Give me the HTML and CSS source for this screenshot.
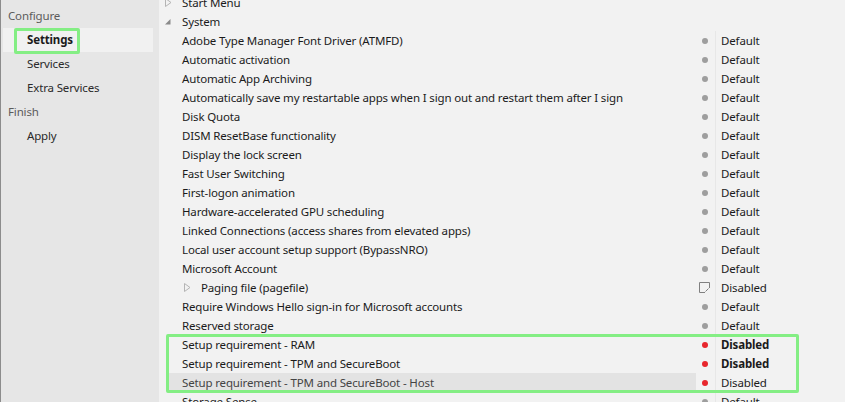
FILE: index.html
```html
<!DOCTYPE html>
<html>
<head>
<meta charset="utf-8">
<link rel="stylesheet" href="styles.css">
</head>
<body>
<div class="app">
  <nav class="sidebar">
    <div class="nav-heading">Configure</div>
    <div class="nav-item active"><span>Settings</span><div class="mark mark-nav"></div></div>
    <div class="nav-item">Services</div>
    <div class="nav-item">Extra Services</div>
    <div class="nav-heading">Finish</div>
    <div class="nav-item">Apply</div>
  </nav>
  <main class="main">
    <div class="tree">
      <div class="row"><div class="name top"><span class="exp"><svg width="8" height="9" viewBox="0 0 8 9"><path d="M1.5 0.5 L7 4.5 L1.5 8.5 Z" fill="none" stroke="#b4b4b4"/></svg></span><span class="label">Start Menu</span></div><div class="val"></div></div>
      <div class="row"><div class="name top"><span class="exp"><svg width="8" height="9" viewBox="0 0 8 9"><path d="M6.5 2 L6.5 7.5 L1 7.5 Z" fill="#8a8a8a"/></svg></span><span class="label">System</span></div><div class="val"></div></div>
      <div class="row"><div class="name leaf"><span class="label">Adobe Type Manager Font Driver (ATMFD)</span></div><div class="val"><span class="dot"></span><span class="vtext">Default</span></div></div>
      <div class="row"><div class="name leaf"><span class="label">Automatic activation</span></div><div class="val"><span class="dot"></span><span class="vtext">Default</span></div></div>
      <div class="row"><div class="name leaf"><span class="label">Automatic App Archiving</span></div><div class="val"><span class="dot"></span><span class="vtext">Default</span></div></div>
      <div class="row"><div class="name leaf"><span class="label">Automatically save my restartable apps when I sign out and restart them after I sign</span></div><div class="val"><span class="dot"></span><span class="vtext">Default</span></div></div>
      <div class="row"><div class="name leaf"><span class="label">Disk Quota</span></div><div class="val"><span class="dot"></span><span class="vtext">Default</span></div></div>
      <div class="row"><div class="name leaf"><span class="label">DISM ResetBase functionality</span></div><div class="val"><span class="dot"></span><span class="vtext">Default</span></div></div>
      <div class="row"><div class="name leaf"><span class="label">Display the lock screen</span></div><div class="val"><span class="dot"></span><span class="vtext">Default</span></div></div>
      <div class="row"><div class="name leaf"><span class="label">Fast User Switching</span></div><div class="val"><span class="dot"></span><span class="vtext">Default</span></div></div>
      <div class="row"><div class="name leaf"><span class="label">First-logon animation</span></div><div class="val"><span class="dot"></span><span class="vtext">Default</span></div></div>
      <div class="row"><div class="name leaf"><span class="label">Hardware-accelerated GPU scheduling</span></div><div class="val"><span class="dot"></span><span class="vtext">Default</span></div></div>
      <div class="row"><div class="name leaf"><span class="label">Linked Connections (access shares from elevated apps)</span></div><div class="val"><span class="dot"></span><span class="vtext">Default</span></div></div>
      <div class="row"><div class="name leaf"><span class="label">Local user account setup support (BypassNRO)</span></div><div class="val"><span class="dot"></span><span class="vtext">Default</span></div></div>
      <div class="row"><div class="name leaf"><span class="label">Microsoft Account</span></div><div class="val"><span class="dot"></span><span class="vtext">Default</span></div></div>
      <div class="row"><div class="name sub"><span class="exp"><svg width="8" height="9" viewBox="0 0 8 9"><path d="M1.5 0.5 L7 4.5 L1.5 8.5 Z" fill="none" stroke="#b4b4b4"/></svg></span><span class="label">Paging file (pagefile)</span></div><div class="val"><span class="icon-cell"><svg width="11" height="11" viewBox="0 0 11 11"><path d="M6 10.5 H0.5 V0.5 H10.5 V6" fill="none" stroke="#808080"/><path d="M6.5 9.5 L9.5 6.5" stroke="#808080"/></svg></span><span class="vtext">Disabled</span></div></div>
      <div class="row"><div class="name leaf"><span class="label">Require Windows Hello sign-in for Microsoft accounts</span></div><div class="val"><span class="dot"></span><span class="vtext">Default</span></div></div>
      <div class="row"><div class="name leaf"><span class="label">Reserved storage</span></div><div class="val"><span class="dot"></span><span class="vtext">Default</span></div></div>
      <div class="row"><div class="name leaf"><span class="label">Setup requirement - RAM</span></div><div class="val"><span class="dot red"></span><span class="vtext bold">Disabled</span></div></div>
      <div class="row"><div class="name leaf"><span class="label">Setup requirement - TPM and SecureBoot</span></div><div class="val"><span class="dot red"></span><span class="vtext bold">Disabled</span></div></div>
      <div class="row"><div class="name leaf"><span class="label hl">Setup requirement - TPM and SecureBoot - Host</span></div><div class="val"><span class="dot red"></span><span class="vtext">Disabled</span></div></div>
      <div class="row"><div class="name leaf"><span class="label">Storage Sense</span></div><div class="val"><span class="dot"></span><span class="vtext">Default</span></div></div>
    </div>
    <div class="mark mark-rows"></div>
  </main>
</div>
</body>
</html>
```
FILE: styles.css
```css
* { box-sizing: border-box; }
html, body { margin: 0; padding: 0; }
body {
  width: 845px;
  height: 402px;
  overflow: hidden;
  font-family: "Noto Sans", "Open Sans", sans-serif;
  font-size: 11.5px;
  letter-spacing: -0.15px;
  color: #1b1b1b;
  background: #f2f2f2;
}
.app { display: flex; height: 402px; }
.sidebar {
  width: 159px;
  flex: none;
  background: #e6e6e6;
  border-left: 1px solid #8c8c8c;
  padding-top: 4px;
}
.nav-heading {
  height: 24px;
  line-height: 24px;
  padding-left: 7px;
  color: #5c5c5c;
}
.nav-item {
  position: relative;
  height: 24px;
  line-height: 24px;
  padding-left: 26px;
  color: #2a2a2a;
}
.nav-item.active {
  margin-left: 2px;
  width: 150px;
  padding-left: 24px;
  background: #f1f1f1;
  font-weight: bold;
  color: #1b1b1b;
}
.mark {
  position: absolute;
  border: 3px solid #84ee84;
  border-radius: 2px;
}
.mark-nav { left: 11px; top: 0; width: 66px; height: 26px; }
.main {
  position: relative;
  flex: 1;
  overflow: hidden;
  background: #f2f2f2;
}
.tree { margin-top: -7px; }
.row { display: flex; height: 19px; align-items: stretch; }
.name { width: 537px; flex: none; display: flex; align-items: stretch; }
.name.top { padding-left: 5px; }
.name.leaf { padding-left: 9px; }
.name.leaf .label { padding-left: 14px; }
.name.sub { padding-left: 24px; }
.exp { width: 18px; flex: none; display: flex; align-items: center; }
.exp svg { display: block; }
.label { flex: 1; line-height: 19px; white-space: nowrap; }
.label.hl { background: #e3e3e3; color: #444444; }
.val { display: flex; align-items: center; flex: 1; }
.dot, .icon-cell { width: 19px; flex: none; display: flex; align-items: center; justify-content: center; height: 19px; }
.dot::before {
  content: "";
  width: 6px; height: 6px;
  border-radius: 50%;
  background: #9e9e9e;
  margin-right: 1px;
}
.dot.red::before { background: #e8262d; }
.icon-cell svg { display: block; margin-right: 2px; }
.vtext {
  line-height: 19px;
  height: 19px;
  padding-left: 5px;
  border-left: 1px solid #e7e7e7;
}
.vtext.bold { font-weight: bold; }
.mark-rows { left: 7px; top: 334px; width: 633px; height: 59px; }
```
